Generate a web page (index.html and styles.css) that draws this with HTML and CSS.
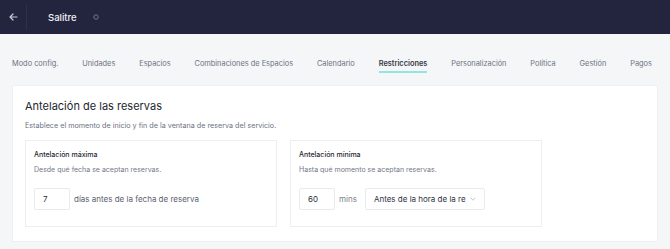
FILE: index.html
```html
<!DOCTYPE html>
<html lang="es">
<head>
<meta charset="utf-8">
<link rel="stylesheet" href="styles.css">
</head>
<body>
<header class="topbar">
  <div class="back">
    <svg width="9" height="8" viewBox="0 0 9 8" fill="none" stroke="#c9cad6" stroke-width="1.2" stroke-linecap="round" stroke-linejoin="round"><path d="M8 4H1.2M4 1L1 4l3 3"/></svg>
  </div>
  <div class="divider"></div>
  <div class="venue">Salitre</div>
  <svg class="venue-icon" width="6" height="6" viewBox="0 0 6 6" fill="none" stroke="#7d7f99" stroke-width="0.9"><circle cx="3" cy="3" r="2.2"/></svg>
</header>
<nav class="tabs">
  <span class="tab">Modo config.</span>
  <span class="tab">Unidades</span>
  <span class="tab">Espacios</span>
  <span class="tab">Combinaciones de Espacios</span>
  <span class="tab">Calendario</span>
  <span class="tab active">Restricciones</span>
  <span class="tab">Personalización</span>
  <span class="tab">Política</span>
  <span class="tab">Gestión</span>
  <span class="tab">Pagos</span>
</nav>
<main class="card">
  <h1 class="title">Antelación de las reservas</h1>
  <p class="desc">Establece el momento de inicio y fin de la ventana de reserva del servicio.</p>
  <div class="boxes">
    <section class="box">
      <h2 class="box-title">Antelación máxima</h2>
      <p class="box-desc">Desde qué fecha se aceptan reservas.</p>
      <div class="row">
        <div class="input">7</div>
        <span class="unit">días antes de la fecha de reserva</span>
      </div>
    </section>
    <section class="box">
      <h2 class="box-title">Antelación mínima</h2>
      <p class="box-desc">Hasta qué momento se aceptan reservas.</p>
      <div class="row">
        <div class="input">60</div>
        <span class="unit mins">mins</span>
        <div class="select">
          <span class="select-text">Antes de la hora de la re</span>
          <svg width="6" height="4" viewBox="0 0 6 4" fill="none" stroke="#b4b8c2" stroke-width="0.8"><path d="M0.5 0.8L3 3.2 5.5 0.8"/></svg>
        </div>
      </div>
    </section>
  </div>
</main>
</body>
</html>
```
FILE: styles.css
```css
* { box-sizing: border-box; }
html, body { margin: 0; padding: 0; }
body {
  width: 670px;
  height: 249px;
  overflow: hidden;
  background: #f5f6f8;
  font-family: Inter, "Noto Sans", sans-serif;
  color: #2b2f3a;
}
.topbar {
  height: 34px;
  background: #23243e;
  display: flex;
  align-items: center;
}
.back {
  width: 26px;
  display: flex;
  justify-content: center;
  padding-left: 1px;
}
.divider {
  width: 1px;
  height: 26px;
  background: #2f3049;
}
.venue {
  margin-left: 21px;
  color: #eef0f5;
  font-size: 9.5px;
  font-weight: 500;
}
.venue-icon { margin-left: 16px; }
.tabs {
  display: flex;
  justify-content: space-between;
  padding: 24px 18px 0 12px;
  height: 51px;
}
.tab {
  font-size: 7.4px;
  color: #6c7281;
  height: 15px;
  line-height: 10px;
  padding-top: 1px;
  white-space: nowrap;
  flex-shrink: 0;
}
.tab.active {
  color: #353a47;
  font-weight: 600;
  border-bottom: 2px solid #8fe7e0;
}
.card {
  margin: 0 12px;
  height: 157px;
  background: #fff;
  border: 1px solid #eef0f3;
  padding: 13px 12px;
}
.title {
  margin: 0;
  font-size: 11px;
  font-weight: 400;
  color: #22262f;
  line-height: 14px;
}
.desc {
  margin: 8px 0 0;
  font-size: 7.2px;
  color: #6b7180;
  line-height: 10px;
}
.boxes {
  display: flex;
  gap: 13px;
  margin-top: 9px;
}
.box {
  width: 252px;
  height: 87px;
  border: 1px solid #eceef2;
  padding: 9px 8px;
}
.box-title {
  margin: 0;
  font-size: 7px;
  font-weight: 500;
  color: #262a33;
  line-height: 9px;
}
.box-desc {
  margin: 6px 0 0;
  font-size: 7px;
  color: #727888;
  line-height: 9px;
}
.row {
  display: flex;
  align-items: center;
  margin-top: 14px;
}
.input {
  width: 36px;
  height: 22px;
  border: 1px solid #e8eaee;
  border-radius: 2px;
  font-size: 8px;
  color: #2b2f3a;
  display: flex;
  align-items: center;
  padding-left: 8px;
}
.unit {
  margin-left: 4px;
  font-size: 8px;
  color: #5b6170;
}
.unit.mins { margin-left: 4px; color: #7a7f8d; }
.select {
  margin-left: 8px;
  width: 120px;
  height: 22px;
  border: 1px solid #e8eaee;
  border-radius: 2px;
  display: flex;
  align-items: center;
  padding: 0 8px;
  gap: 4px;
}
.select-text {
  font-size: 8px;
  color: #2f3340;
  white-space: nowrap;
  overflow: hidden;
  width: 93px;
}
```
